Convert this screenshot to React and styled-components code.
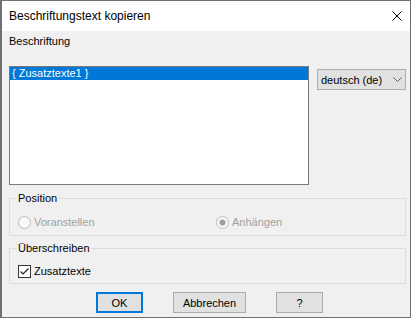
import React from "react";
import styled, { createGlobalStyle } from "styled-components";

const Global = createGlobalStyle`
  html, body { margin: 0; padding: 0; background: #ffffff; }
  body { font-family: "Liberation Sans", Arial, sans-serif; font-size: 11px; color: #000; }
  * { box-sizing: border-box; }
`;

const Window = styled.div`
  width: 411px;
  height: 318px;
  border: 1px solid #707070;
  border-left-width: 2px;
  background: #f0f0f0;
  display: flex;
  flex-direction: column;
`;

const TitleBar = styled.div`
  height: 30px;
  flex: none;
  background: #ffffff;
  display: flex;
  align-items: center;
  padding-left: 7px;
  padding-right: 8px;
  font-family: "Liberation Sans", Arial, sans-serif;
  font-size: 12px;
  color: #000;
`;

const Title = styled.div`
  flex: 1;
  margin-top: -1px;
`;

const CloseButton = styled.div`
  width: 10px;
  height: 10px;
  display: flex;
  margin-right: 0px;
  margin-top: 0px;
`;

const Body = styled.div`
  flex: 1;
  display: flex;
  flex-direction: column;
  padding: 4px 4px 0 7px;
`;

const Label = styled.div`
  line-height: 13px;
  height: 13px;
`;

const TopRow = styled.div`
  display: flex;
  align-items: flex-start;
  gap: 8px;
  margin-top: 18px;
`;

const ListBox = styled.div`
  width: 300px;
  height: 119px;
  border: 1px solid #7a7a7a;
  background: #ffffff;
`;

const ListItem = styled.div`
  height: 13px;
  line-height: 13px;
  padding-left: 2px;
  background: ${(p) => (p.$selected ? "#0078d7" : "transparent")};
  color: ${(p) => (p.$selected ? "#ffffff" : "#000")};
`;

const Combo = styled.div`
  margin-top: 3px;
  width: 89px;
  height: 21px;
  border: 1px solid #adadad;
  background: #e1e1e1;
  display: flex;
  align-items: center;
  padding-left: 3px;
  padding-right: 3px;
`;

const ComboText = styled.div`
  flex: 1;
`;

const Group = styled.fieldset`
  margin: ${(p) => p.$mt}px 0 0 0;
  border: 1px solid #dcdcdc;
  padding: 0 6px ${(p) => p.$pb}px 6px;
  min-width: 0;
`;

const Legend = styled.legend`
  padding: 0 2px;
  line-height: 13px;
  color: #000;
`;

const RadioRow = styled.div`
  display: flex;
  margin-top: ${(p) => p.$mt}px;
  padding-left: 2px;
`;

const Option = styled.div`
  width: ${(p) => (p.$w ? p.$w + "px" : "auto")};
  display: flex;
  align-items: center;
  gap: 3px;
  height: 13px;
  color: ${(p) => (p.$disabled ? "#a0a0a0" : "#000")};
`;

const OptionText = styled.span`
  line-height: 13px;
`;

const ButtonRow = styled.div`
  display: flex;
  gap: 30px;
  margin-top: 8px;
  padding-left: 87px;
`;

const Button = styled.div`
  width: ${(p) => p.$w}px;
  height: 21px;
  border: ${(p) => (p.$default ? "2px solid #0078d7" : "1px solid #adadad")};
  background: #e1e1e1;
  display: flex;
  align-items: center;
  justify-content: center;
`;

const Radio = ({ checked }) => (
  <svg width="13" height="13" viewBox="0 0 13 13">
    <circle cx="6.5" cy="6.5" r="6" fill="#f8f8f8" stroke="#bcbcbc" strokeWidth="1" />
    {checked && <circle cx="6.5" cy="6.5" r="3" fill="#a0a0a0" />}
  </svg>
);

const Checkbox = () => (
  <svg width="13" height="13" viewBox="0 0 13 13">
    <rect x="0.5" y="0.5" width="12" height="12" fill="#ffffff" stroke="#333333" strokeWidth="1" />
    <path d="M2.5 6.5 L5 9 L10.5 3.5" fill="none" stroke="#222" strokeWidth="1.2" />
  </svg>
);

export default function App() {
  return (
    <>
      <Global />
      <Window>
        <TitleBar>
          <Title>Beschriftungstext kopieren</Title>
          <CloseButton>
            <svg width="10" height="10" viewBox="0 0 10 10">
              <path d="M0.5 0.5 L9.5 9.5 M9.5 0.5 L0.5 9.5" stroke="#000" strokeWidth="1" />
            </svg>
          </CloseButton>
        </TitleBar>
        <Body>
          <Label>Beschriftung</Label>
          <TopRow>
            <ListBox>
              <ListItem $selected>{"{ Zusatztexte1 }"}</ListItem>
            </ListBox>
            <Combo>
              <ComboText>deutsch (de)</ComboText>
              <svg width="9" height="5" viewBox="0 0 9 5">
                <path d="M0.5 0.5 L4.5 4.5 L8.5 0.5" fill="none" stroke="#606060" strokeWidth="1" />
              </svg>
            </Combo>
          </TopRow>
          <Group $mt={7} $pb={6}>
            <Legend>Position</Legend>
            <RadioRow $mt={11}>
              <Option $disabled $w={198}>
                <Radio />
                <OptionText>Voranstellen</OptionText>
              </Option>
              <Option $disabled>
                <Radio checked />
                <OptionText>Anhängen</OptionText>
              </Option>
            </RadioRow>
          </Group>
          <Group $mt={6} $pb={5}>
            <Legend>Überschreiben</Legend>
            <RadioRow $mt={10}>
              <Option>
                <Checkbox />
                <OptionText>Zusatztexte</OptionText>
              </Option>
            </RadioRow>
          </Group>
          <ButtonRow>
            <Button $w={47} $default>OK</Button>
            <Button $w={73}>Abbrechen</Button>
            <Button $w={47}>?</Button>
          </ButtonRow>
        </Body>
      </Window>
    </>
  );
}
